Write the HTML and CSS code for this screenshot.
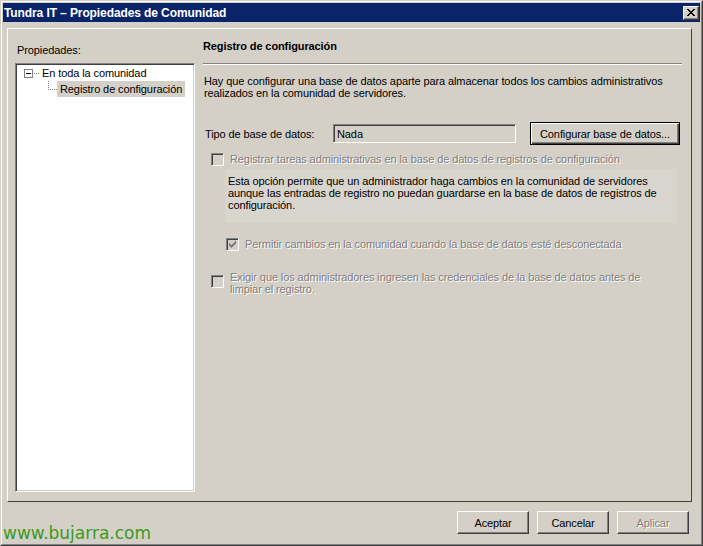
FILE: index.html
```html
<!DOCTYPE html>
<html lang="es">
<head>
  <meta charset="UTF-8">
  <title>Propiedades de Comunidad</title>
  <link rel="stylesheet" href="styles.css">
</head>
<body>
  <div class="window">
    <div class="window-inner">

      <!-- barra de título -->
      <div class="titlebar">
        <span class="title">Tundra IT – Propiedades de Comunidad</span>
        <span class="close">
          <svg width="8" height="7" viewBox="0 0 8 7">
            <path d="M0 0h2v1h1v1h2v-1h1v-1h2v1h-1v1h-1v1h-1v1h1v1h1v1h1v1h-2v-1h-1v-1h-2v1h-1v1h-2v-1h1v-1h1v-1h1v-1h-1v-1h-1v-1h-1z" fill="#000"/>
          </svg>
        </span>
      </div>

      <!-- marco principal -->
      <div class="frame">
        <div class="side">
          <div class="side-label">Propiedades:</div>
          <div class="tree">
            <div class="node">
              <span class="expander"><span class="minus"></span></span>
              <span class="dots-h"></span>
              <span class="node-text">En toda la comunidad</span>
            </div>
            <div class="node child">
              <span class="connector"></span>
              <span class="node-text selected">Registro de configuración</span>
            </div>
          </div>
        </div>

        <div class="page">
          <div class="page-title">Registro de configuración</div>
          <div class="separator"></div>

          <p class="intro">Hay que configurar una base de datos aparte para almacenar todos los cambios administrativos realizados en la comunidad de servidores.</p>

          <div class="db-row">
            <span class="db-label">Tipo de base de datos:</span>
            <span class="field">Nada</span>
            <button class="btn default wide">Configurar base de datos...</button>
          </div>

          <div class="check check-1">
            <span class="box"></span>
            <span class="check-text disabled">Registrar tareas administrativas en la base de datos de registros de configuración</span>
          </div>

          <div class="note">Esta opción permite que un administrador haga cambios en la comunidad de servidores aunque las entradas de registro no puedan guardarse en la base de datos de registros de configuración.</div>

          <div class="check check-2">
            <span class="box checked">
              <svg width="7" height="7" viewBox="0 0 7 7">
                <path d="M6 0h1v3h-1v1h-1v1h-1v1h-1v1h-1v-1h-1v-1h-1v-3h1v1h1v1h1v-1h1v-1h1z" fill="#808080"/>
              </svg>
            </span>
            <span class="check-text disabled">Permitir cambios en la comunidad cuando la base de datos esté desconectada</span>
          </div>

          <div class="check check-3">
            <span class="box"></span>
            <span class="check-text disabled">Exigir que los administradores ingresen las credenciales de la base de datos antes de limpiar el registro.</span>
          </div>
        </div>
      </div>

      <!-- pie con botones -->
      <div class="footer">
        <span class="watermark">www.bujarra.com</span>
        <div class="buttons">
          <button class="btn">Aceptar</button>
          <button class="btn">Cancelar</button>
          <button class="btn off">Aplicar</button>
        </div>
      </div>

    </div>
  </div>
</body>
</html>
```

FILE: styles.css
```css
body {
  margin: 0;
  background-color: #d4d0c8;
  font-family: "Liberation Sans", Arial, sans-serif;
  font-size: 11px;
  letter-spacing: -0.1px;
  color: #000;
}

.window {
  width: 703px;
  height: 546px;
  box-sizing: border-box;
  border: 1px solid;
  border-color: #d4d0c8 #404040 #404040 #d4d0c8;
}

.window-inner {
  height: 100%;
  box-sizing: border-box;
  border: 1px solid;
  border-color: #fff #808080 #808080 #fff;
  padding: 1px;
}

/* barra de título */
.titlebar {
  height: 19px;
  background-color: #0a246a;
  display: flex;
  align-items: center;
  justify-content: space-between;
  padding: 0 1px 0 1px;
}

.title {
  color: #fff;
  font-weight: bold;
  font-size: 12px;
  letter-spacing: -0.1px;
}

.close {
  width: 16px;
  height: 14px;
  box-sizing: border-box;
  background-color: #d4d0c8;
  border: 1px solid;
  border-color: #fff #404040 #404040 #fff;
  box-shadow: inset -1px -1px #808080;
  display: flex;
  align-items: center;
  justify-content: center;
  padding: 0 1px 1px 0;
}

.close svg {
  display: block;
}

/* marco */
.frame {
  margin: 6px 8px 0 4px;
  height: 474px;
  box-sizing: border-box;
  border: 1px solid;
  border-color: #fff #404040 #404040 #fff;
  display: flex;
}

.side {
  width: 180px;
  margin-left: 7px;
  padding-top: 15px;
}

.side-label {
  line-height: 13px;
  padding-left: 2px;
  margin-bottom: 6px;
}

.tree {
  height: 429px;
  box-sizing: border-box;
  background-color: #fff;
  border: 1px solid;
  border-color: #808080 #fff #fff #808080;
  box-shadow: inset 1px 1px #404040, inset -1px -1px #d4d0c8;
  padding-top: 1px;
}

.node {
  height: 16px;
  display: flex;
  align-items: center;
  white-space: nowrap;
}

.expander {
  width: 9px;
  height: 9px;
  box-sizing: border-box;
  border: 1px solid #808080;
  background: #fff;
  margin-left: 8px;
  display: flex;
  align-items: center;
  justify-content: center;
}

.minus {
  width: 5px;
  height: 1px;
  background: #000;
}

.dots-h {
  width: 6px;
  height: 1px;
  margin-left: 1px;
  background-image: linear-gradient(to right, #808080 1px, transparent 1px);
  background-size: 2px 1px;
}

.node-text {
  line-height: 16px;
  padding: 0 2px;
}

.child {
  padding-left: 32px;
}

.connector {
  width: 8px;
  height: 8px;
  flex: none;
  align-self: flex-start;
  border-left: 1px dotted #808080;
  border-bottom: 1px dotted #808080;
}

.selected {
  background-color: #d4d0c8;
  padding: 0 3px;
}

/* página derecha */
.page {
  width: 479px;
  margin-left: 8px;
  padding-top: 11px;
}

.page-title {
  font-weight: bold;
  line-height: 13px;
}

.separator {
  margin-top: 10px;
  border-top: 1px solid #808080;
  border-bottom: 1px solid #fff;
  height: 0;
}

.intro {
  margin: 10px 0 0 1px;
  line-height: 12px;
}

.db-row {
  display: flex;
  align-items: center;
  margin-top: 23px;
  height: 23px;
}

.db-label {
  width: 128px;
  padding-left: 2px;
}

.field {
  width: 183px;
  height: 19px;
  box-sizing: border-box;
  border: 1px solid;
  border-color: #808080 #fff #fff #808080;
  box-shadow: inset 1px 1px #404040, inset -1px -1px #d4d0c8;
  padding: 2px 3px;
  line-height: 14px;
}

.btn {
  width: 72px;
  height: 23px;
  box-sizing: border-box;
  font-family: inherit;
  font-size: 11px;
  letter-spacing: -0.1px;
  color: #000;
  background-color: #d4d0c8;
  border: 1px solid;
  border-color: #fff #404040 #404040 #fff;
  box-shadow: inset -1px -1px #808080;
  padding: 0;
  margin: 0;
}

.btn.wide {
  width: 150px;
  margin-left: 14px;
}

.btn.default {
  border: 1px solid #000;
  box-shadow: inset 1px 1px #fff, inset -1px -1px #404040, inset -2px -2px #808080;
}

.btn.off {
  color: #808080;
  text-shadow: 1px 1px #fff;
}

/* casillas */
.check {
  display: flex;
  align-items: flex-start;
}

.box {
  width: 13px;
  height: 13px;
  flex: none;
  box-sizing: border-box;
  border: 1px solid;
  border-color: #808080 #fff #fff #808080;
  box-shadow: inset 1px 1px #404040, inset -1px -1px #d4d0c8;
  background-color: #d4d0c8;
  display: flex;
  align-items: center;
  justify-content: center;
}

.check-text {
  margin-left: 6px;
  line-height: 12px;
}

.disabled {
  color: #808080;
  text-shadow: 1px 1px #fff;
}

.check-1 {
  margin: 8px 0 0 8px;
}

.note {
  margin: 3px 5px 0 22px;
  padding: 6px 2px 12px 3px;
  line-height: 12px;
  background-color: #d8d5ce;
}

.check-2 {
  margin: 15px 0 0 23px;
}

.check-3 {
  margin: 20px 0 0 8px;
}

.check-3 .box {
  margin-top: 4px;
}

.check-3 .check-text {
  max-width: 425px;
}

/* pie */
.footer {
  display: flex;
  justify-content: space-between;
}

.watermark {
  margin-top: 23px;
  font-family: "DejaVu Sans", Verdana, sans-serif;
  font-size: 17px;
  line-height: 17px;
  letter-spacing: 0;
  color: #3a9a22;
}

.buttons {
  display: flex;
  gap: 8px;
  margin: 9px 11px 0 0;
}
```
